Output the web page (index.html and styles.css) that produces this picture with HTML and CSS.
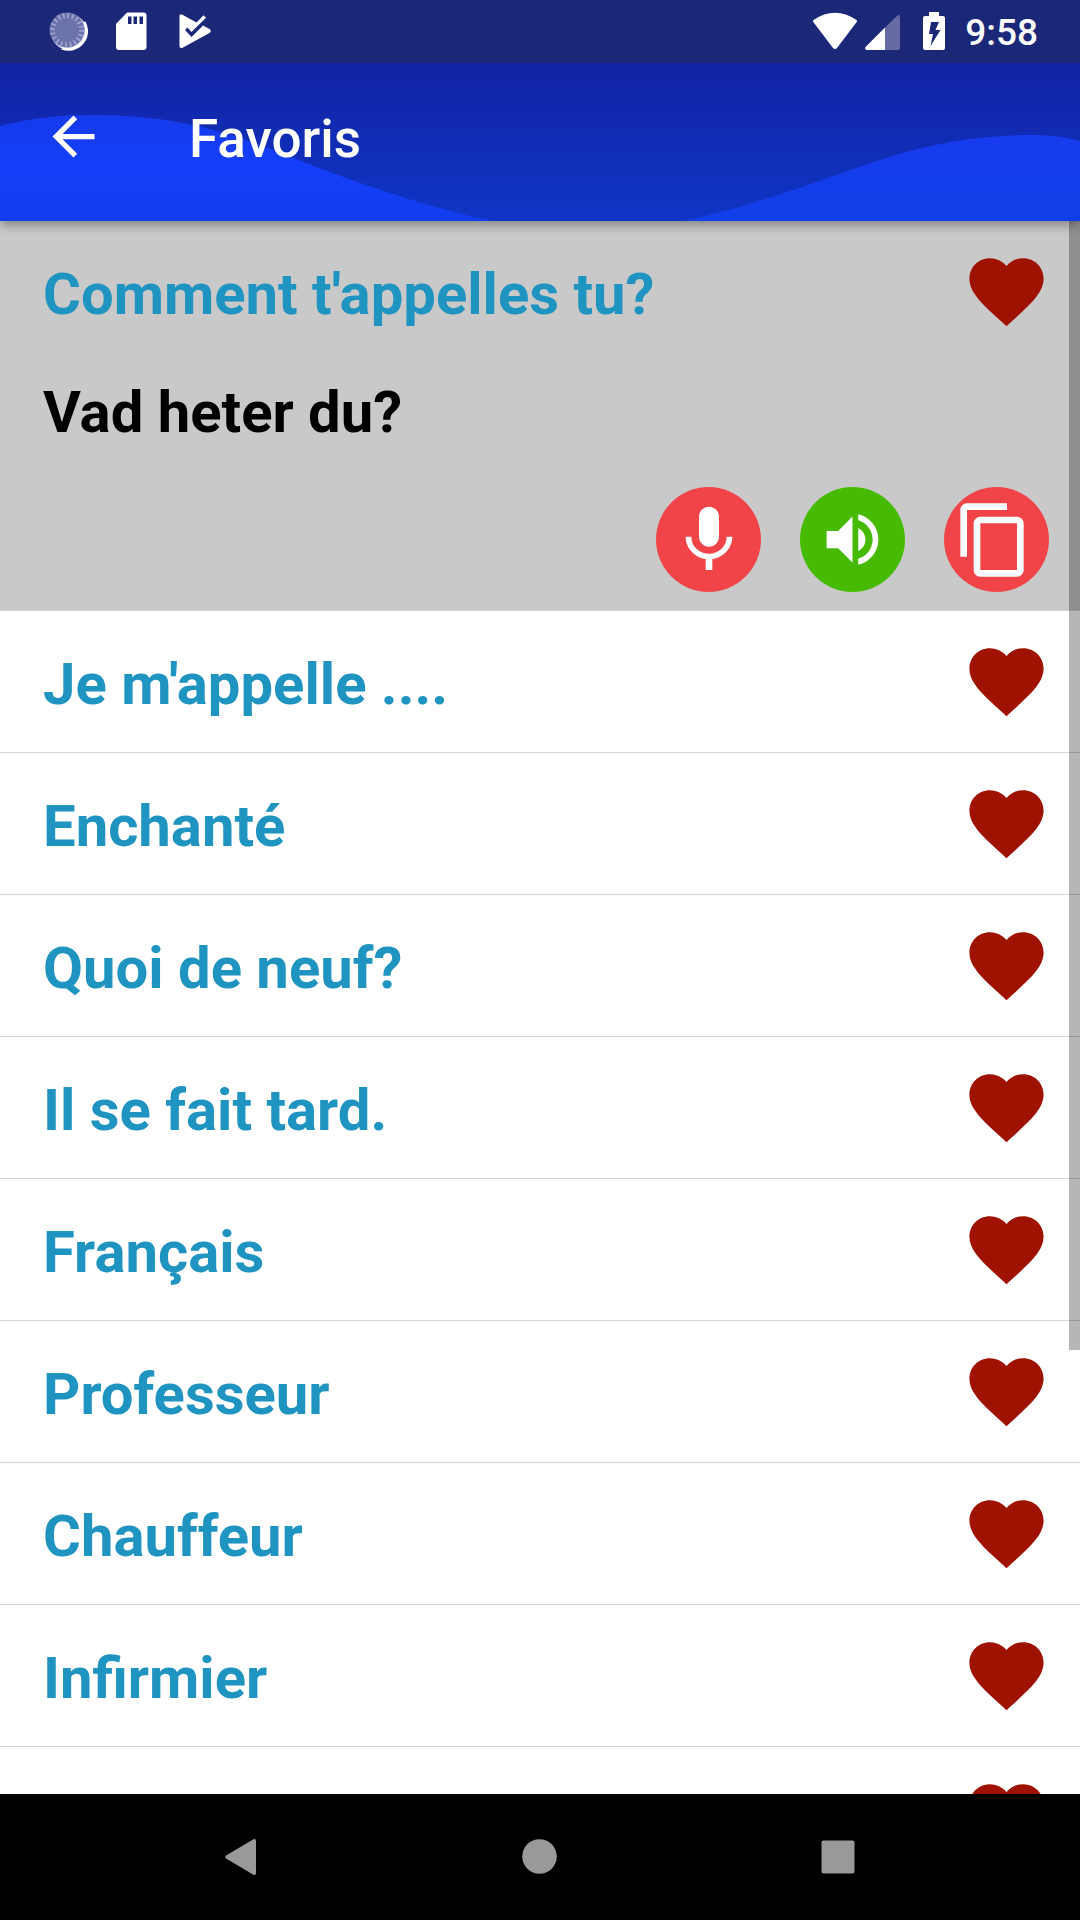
FILE: index.html
```html
<!DOCTYPE html>
<html lang="fr">
<head>
<meta charset="utf-8">
<meta name="viewport" content="width=device-width, initial-scale=1">
<title>Favoris</title>
<link rel="stylesheet" href="styles.css">
</head>
<body>
<svg class="defs" aria-hidden="true">
  <symbol id="heart" viewBox="0 0 24 24"><path d="M12 21.35l-1.45-1.32C5.4 15.36 2 12.28 2 8.5 2 5.42 4.42 3 7.5 3c1.74 0 3.41.81 4.5 2.09C13.09 3.81 14.76 3 16.5 3 19.58 3 22 5.42 22 8.5c0 3.78-3.4 6.86-8.55 11.54L12 21.35z"/></symbol>
</svg>

<div class="status">
  <div class="status-left">
    <svg width="40" height="40" viewBox="48 11 40 40" aria-hidden="true">
      <circle cx="69" cy="32" r="18" fill="#d8daec"/>
      <path d="M84 22A18 18 0 0 1 62 48" fill="none" stroke="#fff" stroke-width="3"/>
      <circle cx="67" cy="30" r="17.5" fill="#6c72ac"/>
      <circle cx="67" cy="30" r="14.5" fill="none" stroke="#a3a7d0" stroke-width="5" stroke-dasharray="1.6 2.955"/>
    </svg>
    <svg width="40" height="40" viewBox="112 11 40 40" aria-hidden="true">
      <path fill="#fff" fill-rule="evenodd" d="M127 12.500H143.500Q146.500 12.500 146.500 15.500V47Q146.500 50 143.500 50H119Q116 50 116 47V24ZM128 16.500V24H131.500V16.500ZM133.500 16.500V24H137V16.500ZM139.500 16.500V24H143V16.500Z"/>
    </svg>
    <svg width="40" height="40" viewBox="176 11 40 40" aria-hidden="true">
      <path fill="#fff" d="M179.500 16Q179.500 13.500 182 14.500L196.500 22.500L203.500 15.200L206 17.700L191.500 32L187.500 27.500L185 30L191.500 37L203 25.500L209.500 29Q212 31 209.500 33L183 47.500Q179.500 49 179.500 46Z"/>
    </svg>
  </div>
  <div class="status-right">
    <svg class="wifi" width="44" height="40" viewBox="813 11 44 40" aria-hidden="true">
      <path fill="#fff" d="M813.500 20Q835 5.500 856.500 20Q857.500 21 856.700 22L837 48Q835 50 833 48L813.300 22Q812.500 21 813.500 20Z"/>
    </svg>
    <svg class="signal" width="35" height="40" viewBox="865 11 35 40" aria-hidden="true">
      <path fill="#666ca3" d="M885 27.500L897.500 15.500Q900 14 900 17V48Q900 50 898 50H885Z"/>
      <path fill="#fff" d="M885 27.500V50H866.500Q864.500 49.500 865.500 47Z"/>
    </svg>
    <svg class="battery" width="22" height="40" viewBox="923 11 22 40" aria-hidden="true">
      <path fill="#fff" fill-rule="evenodd" d="M929 12H939V16H943Q945 16 945 18V48Q945 50 943 50H925Q923 50 923 48V18Q923 16 925 16H929ZM931 22L929 34H933L930.500 46L940.500 30H935.500L939 22Z"/>
    </svg>
    <time class="clock">9:58</time>
  </div>
</div>

<header class="appbar">
  <svg class="wave" viewBox="0 0 1080 158" preserveAspectRatio="none" aria-hidden="true">
    <defs>
      <linearGradient id="crest" x1="0" y1="0" x2="0" y2="1"><stop offset="0" stop-color="#163aeb"/><stop offset=".5" stop-color="#143ffa"/><stop offset="1" stop-color="#103ded"/></linearGradient>
      <linearGradient id="swell" x1="0" y1="0" x2="0" y2="1"><stop offset="0" stop-color="#173bee"/><stop offset="1" stop-color="#103fe8"/></linearGradient>
    </defs>
    <path fill="url(#crest)" d="M0 63C30 55 60 52 93 52C160 52 210 63 260 82C310 101 400 139 493 158H0Z"/>
    <path fill="url(#swell)" d="M684 158C760 142 830 113 880 97C930 80 980 72 1030 72C1050 72 1065 74 1080 78V158Z"/>
  </svg>
  <button class="back" type="button" aria-label="Retour">
    <svg width="63" height="63" viewBox="0 0 24 24" aria-hidden="true"><path fill="#fff" d="M20 11H7.830l5.590-5.590L12 4l-8 8 8 8 1.410-1.410L7.830 13H20v-2z"/></svg>
  </button>
  <h1 class="title">Favoris</h1>
</header>

<main class="content">
  <ul class="list">
    <li class="item item-open">
      <div class="row"><span class="phrase">Comment t'appelles tu?</span><button class="fav" type="button" aria-label="Retirer des favoris"><svg class="heart"><use href="#heart"/></svg></button></div>
      <p class="translation" lang="sv">Vad heter du?</p>
      <div class="actions">
        <button class="action" type="button" aria-label="Enregistrer">
          <svg width="80" height="80" viewBox="0 0 24 24" aria-hidden="true"><path d="M12 14c1.660 0 2.990-1.340 2.990-3L15 5c0-1.660-1.340-3-3-3S9 3.340 9 5v6c0 1.660 1.340 3 3 3zm5.300-3c0 3-2.540 5.100-5.300 5.100S6.700 14 6.700 11H5c0 3.410 2.720 6.230 6 6.720V21h2v-3.280c3.280-.48 6-3.300 6-6.720h-1.700z"/></svg>
        </button>
        <button class="action action-play" type="button" aria-label="Écouter">
          <svg width="69" height="69" viewBox="0 0 24 24" aria-hidden="true"><path d="M3 9v6h4l5 5V4L7 9H3zm13.500 3c0-1.770-1.020-3.290-2.500-4.030v8.050c1.480-.73 2.500-2.250 2.500-4.020zM14 3.230v2.060c2.890.86 5 3.540 5 6.710s-2.110 5.850-5 6.710v2.060c4.010-.91 7-4.490 7-8.770s-2.990-7.860-7-8.770z"/></svg>
        </button>
        <button class="action" type="button" aria-label="Copier">
          <svg width="80" height="80" viewBox="1 0 24 24" aria-hidden="true"><path d="M16 1H4c-1.100 0-2 .9-2 2v14h2V3h12V1zm3 4H8c-1.100 0-2 .9-2 2v14c0 1.100.9 2 2 2h11c1.100 0 2-.9 2-2V7c0-1.100-.9-2-2-2zm0 16H8V7h11v14z"/></svg>
        </button>
      </div>
    </li>
    <li class="item"><div class="row"><span class="phrase">Je m'appelle ....</span><button class="fav" type="button" aria-label="Retirer des favoris"><svg class="heart"><use href="#heart"/></svg></button></div></li>
    <li class="item"><div class="row"><span class="phrase">Enchanté</span><button class="fav" type="button" aria-label="Retirer des favoris"><svg class="heart"><use href="#heart"/></svg></button></div></li>
    <li class="item"><div class="row"><span class="phrase">Quoi de neuf?</span><button class="fav" type="button" aria-label="Retirer des favoris"><svg class="heart"><use href="#heart"/></svg></button></div></li>
    <li class="item"><div class="row"><span class="phrase">Il se fait tard.</span><button class="fav" type="button" aria-label="Retirer des favoris"><svg class="heart"><use href="#heart"/></svg></button></div></li>
    <li class="item"><div class="row"><span class="phrase">Français</span><button class="fav" type="button" aria-label="Retirer des favoris"><svg class="heart"><use href="#heart"/></svg></button></div></li>
    <li class="item"><div class="row"><span class="phrase">Professeur</span><button class="fav" type="button" aria-label="Retirer des favoris"><svg class="heart"><use href="#heart"/></svg></button></div></li>
    <li class="item"><div class="row"><span class="phrase">Chauffeur</span><button class="fav" type="button" aria-label="Retirer des favoris"><svg class="heart"><use href="#heart"/></svg></button></div></li>
    <li class="item"><div class="row"><span class="phrase">Infirmier</span><button class="fav" type="button" aria-label="Retirer des favoris"><svg class="heart"><use href="#heart"/></svg></button></div></li>
    <li class="item"><div class="row"><span class="phrase"></span><button class="fav" type="button" aria-label="Retirer des favoris"><svg class="heart"><use href="#heart"/></svg></button></div></li>
  </ul>
  <div class="scroll-thumb"></div>
</main>

<nav class="navbar">
  <button class="nav-key" type="button" aria-label="Précédent"><svg width="36" height="36" viewBox="0 0 36 36" aria-hidden="true"><path d="M29 .5Q32 -1 32 2V34Q32 37 29 35.500L2 19.500Q.5 18 2 16.500Z"/></svg></button>
  <button class="nav-key" type="button" aria-label="Accueil"><svg width="36" height="36" viewBox="0 0 36 36" aria-hidden="true"><circle cx="17.500" cy="17.500" r="17.300"/></svg></button>
  <button class="nav-key" type="button" aria-label="Applications récentes"><svg width="36" height="36" viewBox="0 0 36 36" aria-hidden="true"><rect x="1.500" y="1.500" width="33" height="33" rx="2"/></svg></button>
</nav>
</body>
</html>
```

FILE: styles.css
```css
* {
  box-sizing: border-box;
}

body {
  margin: 0;
  height: 100vh;
  display: flex;
  flex-direction: column;
  background: #fff;
  font-family: Roboto, "Liberation Sans", sans-serif;
}

button {
  display: flex;
  align-items: center;
  justify-content: center;
  padding: 0;
  border: 0;
  background: none;
  cursor: pointer;
}

.defs {
  position: absolute;
  width: 0;
  height: 0;
}

/* System status bar */
.status {
  flex: none;
  height: 63px;
  padding: 11px 42px 0 48px;
  display: flex;
  justify-content: space-between;
  align-items: flex-start;
  background: #1b2777;
}

.status-left,
.status-right {
  display: flex;
}

.status-left {
  gap: 24px;
}

.wifi {
  margin-right: 8px;
}

.signal {
  margin-right: 23px;
}

.battery {
  margin-right: 20px;
}

.clock {
  color: #fff;
  font-size: 37px;
  line-height: 44px;
  font-weight: 500;
}

/* App bar */
.appbar {
  flex: none;
  position: relative;
  z-index: 2;
  height: 158px;
  padding: 0 42px 11px;
  display: flex;
  align-items: center;
  gap: 84px;
  background: linear-gradient(#1123a4, #1035c6);
  box-shadow: 0 4px 10px rgba(0, 0, 0, 0.35);
}

.wave {
  position: absolute;
  inset: 0;
  width: 100%;
  height: 100%;
}

.back,
.title {
  position: relative;
}

.title {
  margin: 0;
  padding-top: 4px;
  color: #fff;
  font-size: 53px;
  line-height: 62px;
  font-weight: 500;
}

/* Favourites list */
.content {
  flex: 1;
  min-height: 0;
  position: relative;
  overflow: hidden;
}

/* Keeps the app bar's shadow off the status bar */
.status {
  position: relative;
  z-index: 3;
}

.list {
  margin: 0;
  padding: 0;
  list-style: none;
}

.item {
  border-bottom: 1px solid #d5d5d5;
}

.item-open {
  padding-bottom: 18px;
  background: #c9c9c9;
}

.row {
  padding: 26px 29px 26px 43px;
  display: flex;
  justify-content: space-between;
  align-items: flex-start;
}

.phrase,
.translation {
  font-size: 58px;
  line-height: 68px;
  font-weight: 700;
}

.phrase {
  padding-top: 13px;
  color: #2094c0;
}

.translation {
  margin: 0;
  padding: 16px 43px 0;
  color: #000;
}

.heart {
  width: 89px;
  height: 89px;
  fill: #a01200;
}

.actions {
  padding: 41px 31px 0;
  display: flex;
  justify-content: flex-end;
  gap: 39px;
}

.action {
  width: 105px;
  height: 105px;
  border-radius: 50%;
  background: #f14449;
  fill: #fff;
}

.action-play {
  background: #47bb03;
}

.scroll-thumb {
  position: absolute;
  top: 0;
  right: 0;
  width: 11px;
  height: 71.8%;
  background: rgba(0, 0, 0, 0.285);
}

/* System navigation bar */
.navbar {
  flex: none;
  height: 126px;
  display: flex;
  justify-content: center;
  background: #000;
}

.nav-key {
  width: 298px;
  fill: #999;
}
```
